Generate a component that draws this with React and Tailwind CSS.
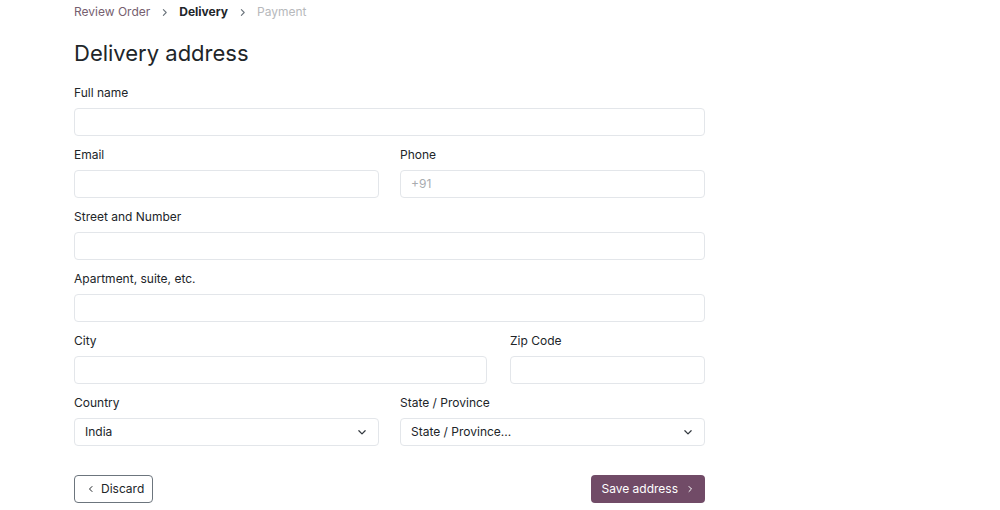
import React from "react";

function Label({ children }) {
  return <label className="block text-[12px] leading-[18px] h-[18px] mb-[6px] text-[#212529]">{children}</label>;
}

function Input({ placeholder }) {
  return (
    <div className="h-[28px] rounded-[4px] border border-[#e3e6ea] bg-white px-[10px] flex items-center text-[12px] text-[#a8acb0]">
      {placeholder}
    </div>
  );
}

function Chevron({ dir = "down", size = 9, color = "#343a40", sw = 2 }) {
  const d = dir === "down" ? "M3 6l5 5 5-5" : dir === "right" ? "M6 3l5 5-5 5" : "M10 3L5 8l5 5";
  return (
    <svg width={size} height={size} viewBox="0 0 16 16" fill="none" stroke={color} strokeWidth={sw} strokeLinecap="round" strokeLinejoin="round">
      <path d={d} />
    </svg>
  );
}

function Select({ value }) {
  return (
    <div className="h-[28px] rounded-[4px] border border-[#e3e6ea] bg-white pl-[10px] pr-[11px] flex items-center justify-between text-[12px] text-[#212529]">
      <span>{value}</span>
      <Chevron dir="down" size={10} />
    </div>
  );
}

function Field({ label, placeholder, className = "" }) {
  return (
    <div className={className}>
      <Label>{label}</Label>
      <Input placeholder={placeholder} />
    </div>
  );
}

export default function App() {
  return (
    <div className="w-[1000px] h-[510px] bg-white overflow-hidden" style={{ fontFamily: "Inter, 'Noto Sans', sans-serif" }}>
      <div className="ml-[74px] w-[631px] pt-[3px]">
        <nav className="flex items-center text-[12px] leading-[18px]">
          <span className="text-[#76606f]">Review Order</span>
          <span className="mx-[10px] flex items-center"><Chevron dir="right" size={9} color="#6c757d" sw={2} /></span>
          <span className="font-bold text-[#212529]">Delivery</span>
          <span className="mx-[10px] flex items-center"><Chevron dir="right" size={9} color="#6c757d" sw={2} /></span>
          <span className="text-[#b7b9bc]">Payment</span>
        </nav>
        <h1 className="mt-[17px] text-[22px] leading-[30px] font-normal text-[#212529]">Delivery address</h1>
        <div className="mt-[16px] flex flex-col gap-[10px]">
          <Field label="Full name" />
          <div className="grid grid-cols-2 gap-x-[21px]">
            <Field label="Email" />
            <Field label="Phone" placeholder="+91" />
          </div>
          <Field label="Street and Number" />
          <Field label="Apartment, suite, etc." />
          <div className="grid grid-cols-[413fr_195fr] gap-x-[23px]">
            <Field label="City" />
            <Field label="Zip Code" />
          </div>
          <div className="grid grid-cols-2 gap-x-[21px]">
            <div>
              <Label>Country</Label>
              <Select value="India" />
            </div>
            <div>
              <Label>State / Province</Label>
              <Select value="State / Province..." />
            </div>
          </div>
        </div>
        <div className="mt-[29px] flex items-center justify-between">
          <button className="h-[28px] pl-[12px] pr-[8px] rounded-[4px] border border-[#6c757d] bg-white text-[12px] text-[#212529] flex items-center gap-[6px]">
            <Chevron dir="left" size={8} color="#212529" sw={2} />
            <span>Discard</span>
          </button>
          <button className="h-[28px] pl-[10px] pr-[11px] rounded-[4px] bg-[#714b67] text-[12px] text-white flex items-center gap-[8px]">
            <span>Save address</span>
            <Chevron dir="right" size={8} color="#ffffff" sw={2} />
          </button>
        </div>
      </div>
    </div>
  );
}
